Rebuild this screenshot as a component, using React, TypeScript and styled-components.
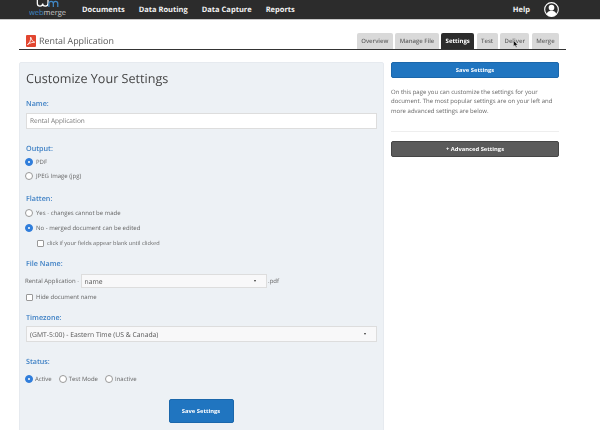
import styled, { createGlobalStyle } from "styled-components";

const GlobalStyle = createGlobalStyle`
  html, body {
    margin: 0;
    padding: 0;
    background: #fff;
    overflow: hidden;
  }
  body {
    font-family: "Open Sans", sans-serif;
    color: #555;
    text-rendering: geometricPrecision;
  }
`;

const Page = styled.div`
  width: 600px;
  height: 430px;
  overflow: hidden;
  position: relative;
  opacity: 0.995;
`;

const TopBar = styled.header`
  height: 19px;
  background: #2b2b2b;
  border-bottom: 1px solid #c9c9c9;
  display: flex;
  align-items: center;
  padding-left: 29px;
  padding-right: 41px;
`;

const Logo = styled.div`
  width: 37px;
  height: 19px;
  display: flex;
  flex-direction: column;
  align-items: center;
  margin-right: 16px;
  overflow: hidden;
`;

const LogoText = styled.span`
  font-size: 7.5px;
  line-height: 8px;
  color: #c9c9c9;
  margin-top: 1px;

  b {
    font-weight: 400;
    color: #3f87c5;
  }
`;

const NavLink = styled.a`
  font-size: 7.5px;
  font-weight: 700;
  color: #f2f2f2;
  margin-right: 14px;
`;

const TopRight = styled.div`
  margin-left: auto;
  display: flex;
  align-items: center;
  gap: 14px;
`;

const HelpLink = styled.a`
  font-size: 7.5px;
  font-weight: 700;
  color: #f2f2f2;
`;

const DocHeader = styled.div`
  margin: 12px 34px 0 19px;
  height: 17px;
  border-bottom: 1px solid #333;
  display: flex;
  align-items: flex-end;
  justify-content: space-between;
`;

const DocTitle = styled.div`
  display: flex;
  align-items: center;
  gap: 3px;
  padding-left: 7px;
  font-size: 8.9px;
  color: #555;
  height: 17px;
`;

const Tabs = styled.nav`
  display: flex;
  gap: 2.5px;
  margin-right: 7px;
`;

const Tab = styled.div<{ $active?: boolean }>`
  font-size: 6px;
  font-weight: ${(p) => (p.$active ? 700 : 600)};
  height: 16px;
  line-height: 16px;
  padding: 0 4.4px;
  border-radius: 2px 2px 0 0;
  color: ${(p) => (p.$active ? "#fff" : "#666")};
  background: ${(p) => (p.$active ? "#2b2b2b" : "#d9d9d9")};
`;

const Columns = styled.div`
  display: flex;
  gap: 7px;
  margin: 12px 41px 0 19px;
  align-items: flex-start;
`;

const FormPanel = styled.main`
  width: 365px;
  height: 400px;
  flex: none;
  box-sizing: border-box;
  background: #edf1f5;
  border: 1px solid #e6eaef;
  border-radius: 2px;
  padding: 0 6px 0 5px;
`;

const Heading = styled.h1`
  font-size: 12.6px;
  font-weight: 400;
  color: #444;
  margin: 0 0 0 1px;
  padding-top: 7px;
  line-height: 18px;
`;

const Label = styled.div<{ $top: number }>`
  font-size: 7.2px;
  font-weight: 600;
  line-height: 10px;
  color: #3b7fc4;
  margin-left: 1px;
  margin-top: ${(p) => p.$top}px;
`;

const TextField = styled.div`
  margin: 4px 0 0 1px;
  height: 16px;
  box-sizing: border-box;
  background: #fff;
  border: 1px solid #ddd;
  font-size: 6.5px;
  line-height: 14px;
  padding-left: 3px;
  color: #777;
`;

const Option = styled.div<{ $top: number; $indent?: number; $small?: boolean }>`
  display: flex;
  align-items: center;
  gap: 3px;
  font-size: ${(p) => (p.$small ? 5.6 : 6)}px;
  line-height: 8px;
  color: #666;
  margin-top: ${(p) => p.$top}px;
  margin-left: ${(p) => p.$indent ?? 0}px;
`;

const Radio = styled.span<{ $on?: boolean }>`
  width: 6px;
  height: 6px;
  flex: none;
  border-radius: 50%;
  box-sizing: content-box;
  background: ${(p) => (p.$on ? "#2f7ddb" : "#fff")};
  border: 0.5px solid ${(p) => (p.$on ? "#2f7ddb" : "#999")};
  position: relative;

  &::after {
    content: "";
    display: ${(p) => (p.$on ? "block" : "none")};
    position: absolute;
    left: 2px;
    top: 2px;
    width: 2px;
    height: 2px;
    border-radius: 50%;
    background: #fff;
  }
`;

const Check = styled.span`
  width: 5px;
  height: 5px;
  flex: none;
  background: #fff;
  border: 0.5px solid #999;
  border-radius: 1px;
`;

const FileRow = styled.div<{ $top: number }>`
  display: flex;
  align-items: center;
  gap: 1.5px;
  margin-top: ${(p) => p.$top}px;
  font-size: 6px;
  color: #666;
`;

const Select = styled.div<{ $width?: number; $grow?: boolean }>`
  height: ${(p) => (p.$grow ? 16 : 14)}px;
  box-sizing: border-box;
  background: #f8f8f9;
  border: 1px solid #ddd;
  font-size: 6.8px;
  padding: 0 3px;
  color: #555;
  display: flex;
  justify-content: space-between;
  align-items: center;
  flex: ${(p) => (p.$grow ? 1 : "none")};
  margin-left: ${(p) => (p.$grow ? "1px" : "0")};
  width: ${(p) => (p.$width ? `${p.$width}px` : "auto")};
`;

const Caret = styled.span`
  width: 0;
  height: 0;
  margin-right: 7px;
  border-left: 1.5px solid transparent;
  border-right: 1.5px solid transparent;
  border-top: 2px solid #333;
`;

const StatusRow = styled.div`
  display: flex;
  gap: 7px;
  margin-top: 8px;
`;

const StatusOption = styled.div`
  display: flex;
  align-items: center;
  gap: 2px;
  font-size: 6px;
  line-height: 8px;
  color: #666;
`;

const SubmitWrap = styled.div`
  display: flex;
  justify-content: center;
  margin-top: 16px;
`;

const SubmitButton = styled.button`
  width: 65px;
  height: 24px;
  padding: 0;
  background: #1f74c0;
  border: 1px solid #1a66ab;
  border-radius: 2px;
  color: #fff;
  font-family: inherit;
  font-size: 5.8px;
  font-weight: 700;
`;

const Sidebar = styled.aside`
  flex: 1;
  min-width: 0;
`;

const SideButton = styled.button<{ $dark?: boolean }>`
  display: block;
  width: 100%;
  height: 16px;
  padding: 0;
  border: 1px solid ${(p) => (p.$dark ? "#444" : "#1a66ab")};
  border-radius: 2px;
  background: ${(p) => (p.$dark ? "#5a5a5a" : "#1f74c0")};
  color: #fff;
  font-family: inherit;
  font-size: 5.8px;
  font-weight: 700;
`;

const SideText = styled.p`
  margin: 10px 0 0;
  font-size: 6px;
  line-height: 9.3px;
  color: #666;
`;

const Divider = styled.hr`
  border: 0;
  border-top: 1px solid #eee;
  margin: 15px 0 9px;
`;

const Cursor = styled.svg`
  position: absolute;
  left: 513px;
  top: 40px;
`;

function LogoMark() {
  return (
    <svg width="24" height="8" viewBox="0 0 26 9" fill="none">
      <path d="M1 0v4a3 3 0 0 0 6 0a3 3 0 0 0 6 0V0" stroke="#fff" strokeWidth="1.4" />
      <path d="M14 8V4a2.5 2.5 0 0 1 5 0v4M19 4a2.5 2.5 0 0 1 5 0v4" stroke="#3f87c5" strokeWidth="1.4" />
    </svg>
  );
}

function PdfIcon() {
  return (
    <svg width="10" height="12" viewBox="0 0 10 12">
      <rect width="10" height="12" rx="1" fill="#e2452f" />
      <path d="M1.5 9.5C3.5 8.5 5 5 4.7 2.2c1 3 2 4.5 4 5-2.2 0-4.5.6-7.2 2.3z" fill="none" stroke="#fff" strokeWidth="0.9" />
    </svg>
  );
}

function UserIcon() {
  return (
    <svg width="15" height="15" viewBox="0 0 16 16">
      <circle cx="8" cy="8" r="7.3" fill="#2b2b2b" stroke="#fff" strokeWidth="1.2" />
      <circle cx="8" cy="6" r="3" fill="#fff" />
      <path d="M2.8 13c.7-2.6 2.8-3.6 5.2-3.6s4.5 1 5.2 3.6A7 7 0 0 1 2.8 13z" fill="#fff" />
    </svg>
  );
}

export default function App() {
  return (
    <Page>
      <GlobalStyle />
      <TopBar>
        <Logo>
          <LogoMark />
          <LogoText><b>web</b>merge</LogoText>
        </Logo>
        <NavLink>Documents</NavLink>
        <NavLink>Data Routing</NavLink>
        <NavLink>Data Capture</NavLink>
        <NavLink>Reports</NavLink>
        <TopRight>
          <HelpLink>Help</HelpLink>
          <UserIcon />
        </TopRight>
      </TopBar>
      <DocHeader>
        <DocTitle>
          <PdfIcon />
          Rental Application
        </DocTitle>
        <Tabs>
          <Tab>Overview</Tab>
          <Tab>Manage File</Tab>
          <Tab $active>Settings</Tab>
          <Tab>Test</Tab>
          <Tab>Deliver</Tab>
          <Tab>Merge</Tab>
        </Tabs>
      </DocHeader>
      <Columns>
        <FormPanel>
          <Heading>Customize Your Settings</Heading>
          <Label $top={11}>Name:</Label>
          <TextField>Rental Application</TextField>
          <Label $top={15}>Output:</Label>
          <Option $top={4}><Radio $on />PDF</Option>
          <Option $top={6}><Radio />JPEG Image (jpg)</Option>
          <Label $top={14}>Flatten:</Label>
          <Option $top={5}><Radio />Yes - changes cannot be made</Option>
          <Option $top={7}><Radio $on />No - merged document can be edited</Option>
          <Option $top={7} $indent={12} $small><Check />click if your fields appear blank until clicked</Option>
          <Label $top={12}>File Name:</Label>
          <FileRow $top={5}>
            Rental Application -
            <Select $width={186}>name<Caret /></Select>
            .pdf
          </FileRow>
          <Option $top={5} $indent={1}><Check />Hide document name</Option>
          <Label $top={12}>Timezone:</Label>
          <FileRow $top={3}>
            <Select $grow>(GMT-5:00) - Eastern Time (US &amp; Canada)<Caret /></Select>
          </FileRow>
          <Label $top={15}>Status:</Label>
          <StatusRow>
            <StatusOption><Radio $on />Active</StatusOption>
            <StatusOption><Radio />Test Mode</StatusOption>
            <StatusOption><Radio />Inactive</StatusOption>
          </StatusRow>
          <SubmitWrap>
            <SubmitButton>Save Settings</SubmitButton>
          </SubmitWrap>
        </FormPanel>
        <Sidebar>
          <SideButton>Save Settings</SideButton>
          <SideText>
            On this page you can customize the settings for your document. The most popular settings are on your left and more advanced settings are below.
          </SideText>
          <Divider />
          <SideButton $dark>+ Advanced Settings</SideButton>
        </Sidebar>
      </Columns>
      <Cursor width="6" height="8" viewBox="0 0 6 8">
        <path d="M0.5 0.5v6l1.5-1.3 1 2.3 1-.4-1-2.2h2z" fill="#111" stroke="#fff" strokeWidth="0.4" />
      </Cursor>
    </Page>
  );
}
